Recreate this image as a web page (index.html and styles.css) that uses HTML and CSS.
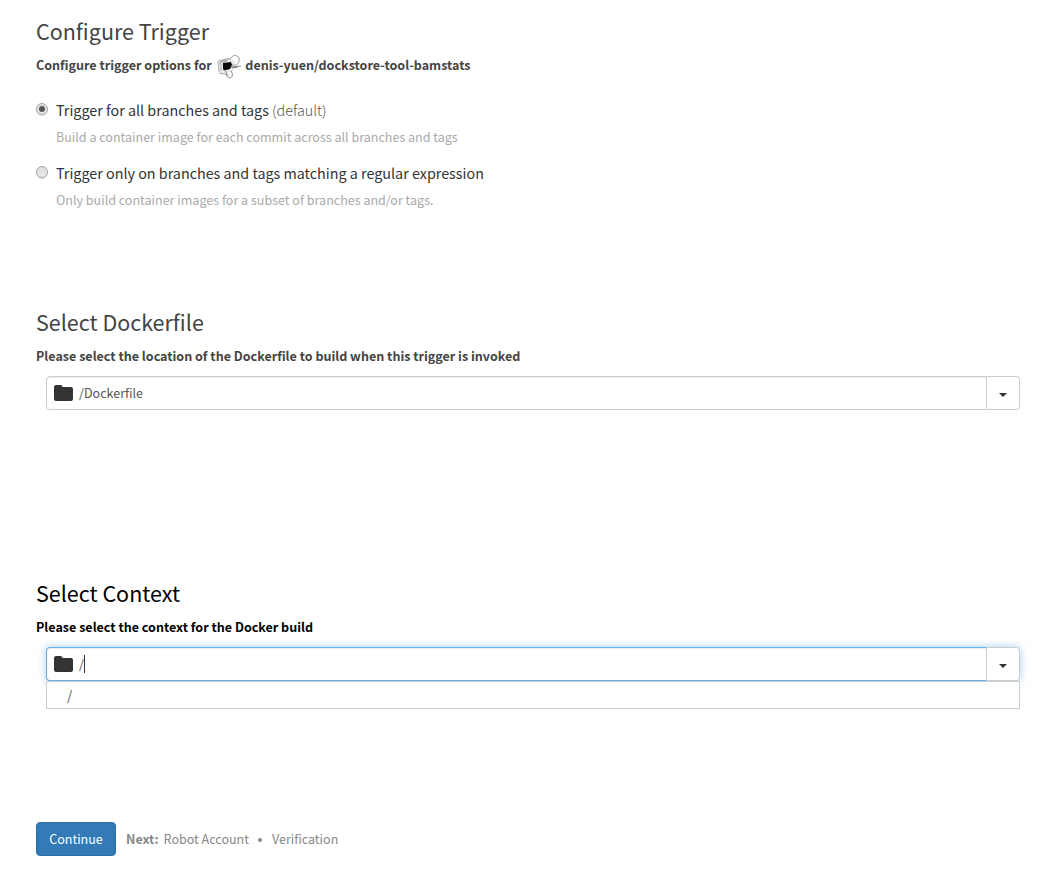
FILE: index.html
```html
<!DOCTYPE html>
<html lang="en">
<head>
<meta charset="utf-8">
<title>Configure Trigger</title>
<link rel="stylesheet" href="styles.css">
</head>
<body>
<main class="setup">
  <section class="section trigger">
    <h3 class="title">Configure Trigger</h3>
    <div class="lead"><strong>Configure trigger options for</strong>
      <svg class="avatar" viewBox="0 0 24 24" fill="none">
        <path d="M0 7L13 3L18 7L16 16L4 20Z" fill="#e9e9e9"/>
        <path d="M1 7L2 17M2 7L4 9L4 16M1 6L13 3M2 18L12 20" stroke="#a0a0a0" stroke-width=".9"/>
        <path d="M3 6L12 4L9 7L4 8Z" fill="#aaa"/>
        <path d="M6 8L14 7L15 10L13 14L7 15.500L6 14Z" fill="#050505"/>
        <path d="M13 5C14 0 20 -1 22 3C23 8 20 11 15 10" stroke="#999" stroke-width="1"/>
        <path d="M14 12L24 11M15 13L21 12M9 16C9 21 11 23 13 23C16 22 16 19 14 16" stroke="#808080" stroke-width="1"/>
      </svg>
      <strong>denis-yuen/dockstore-tool-bamstats</strong></div>
    <div class="option">
      <span class="radio checked"></span>
      <div><div class="label">Trigger for all branches and tags <span class="light">(default)</span></div>
      <div class="help">Build a container image for each commit across all branches and tags</div></div>
    </div>
    <div class="option">
      <span class="radio"></span>
      <div><div class="label">Trigger only on branches and tags matching a regular expression</div>
      <div class="help">Only build container images for a subset of branches and/or tags.</div></div>
    </div>
  </section>
  <section class="section dockerfile">
    <h3 class="title">Select Dockerfile</h3>
    <div class="lead"><strong>Please select the location of the Dockerfile to build when this trigger is invoked</strong></div>
    <div class="picker">
      <div class="field"><svg class="folder" viewBox="0 0 19 16"><path d="M2 0H6.500Q8.500 0 8.500 2H17Q19 2 19 4V14Q19 16 17 16H2Q0 16 0 14V2Q0 0 2 0Z"/></svg><span>/Dockerfile</span></div>
      <div class="toggle"><span class="caret"></span></div>
    </div>
  </section>
  <section class="section context">
    <h3 class="title">Select Context</h3>
    <div class="lead"><strong>Please select the context for the Docker build</strong></div>
    <div class="picker focused">
      <div class="field"><svg class="folder" viewBox="0 0 19 16"><path d="M2 0H6.500Q8.500 0 8.500 2H17Q19 2 19 4V14Q19 16 17 16H2Q0 16 0 14V2Q0 0 2 0Z"/></svg><span>/</span><span class="cursor"></span></div>
      <div class="toggle"><span class="caret"></span></div>
    </div>
    <div class="menu">/</div>
  </section>
  <footer class="actions">
    <button class="continue">Continue</button>
    <strong class="next">Next:</strong><span class="step">Robot Account</span><span class="dot"></span><span class="step">Verification</span>
  </footer>
</main>
</body>
</html>
```
FILE: styles.css
```css
* { box-sizing: border-box; }
body { margin: 0; background: #fff; color: #444; font-family: "Source Sans Pro", "Noto Sans CJK SC", sans-serif; font-size: 12.54px; line-height: 20px; white-space: nowrap; }
.setup { height: 874px; padding: 15px 20px 0 36px; overflow: hidden; }
.trigger { height: 291px; }
.dockerfile { height: 271px; }
.context { height: 245px; color: #000; }
.title { margin: 0; height: 33px; font-size: 21.5px; line-height: 32px; font-weight: 400; }
.lead { display: flex; align-items: center; height: 34px; padding-bottom: 1px; }
.avatar { width: 24px; height: 24px; margin: 5px 4.6px 0 5px; overflow: visible; }
.option { display: flex; height: 63px; padding-top: 16px; }
.radio { width: 12px; height: 12px; margin: 5px 8px 0 0; flex: none; border: 1px solid #a5a5a5; border-radius: 50%; background: linear-gradient(#ddd, #ececec); box-shadow: 0 1px 1px #ddd; display: flex; align-items: center; justify-content: center; }
.checked::after { content: ""; width: 6px; height: 6px; border-radius: 50%; background: #555; }
.label { font-size: 14.33px; line-height: 24px; color: #333; }
.light { font-weight: 300; color: #555; }
.help { margin-top: 5px; line-height: 20px; color: #aaa; }
.picker { display: flex; height: 34px; margin: 3px 0 0 10px; border-radius: 4px; }
.field { flex: 1; display: flex; align-items: center; padding-left: 7px; color: #555; border: 1px solid #ccc; border-radius: 4px 0 0 4px; box-shadow: inset 0 1px 1px rgba(0,0,0,.075); }
.folder { width: 19px; height: 16px; margin-right: 6px; fill: #333; }
.toggle { width: 33px; display: flex; align-items: center; justify-content: center; border: 1px solid #ccc; border-left: 0; border-radius: 0 4px 4px 0; }
.caret { margin-top: 3px; border: 4px solid transparent; border-top-color: #333; border-bottom: 0; }
.focused { box-shadow: 0 0 8px rgba(102,175,233,.6); }
.focused .field { border-color: #66afe9; border-right-color: #ccc; }
.cursor { width: 1px; height: 18px; background: #333; }
.menu { height: 28px; margin-left: 10px; padding: 3px 0 0 20px; border: 1px solid #ccc; position: relative; background: #fff; color: #555; font-size: 13.4px; }
.actions { display: flex; align-items: center; height: 34px; color: #888; }
.continue { width: 80px; height: 34px; margin: 0 10px 0 0; padding: 0; border: 1px solid #2e6da4; border-radius: 4px; background: #337ab7; color: #fff; font: inherit; }
.next { margin-right: 5px; }
.dot { width: 4px; height: 4px; margin: 2px 10px 0 9px; border-radius: 50%; background: #888; }
```
